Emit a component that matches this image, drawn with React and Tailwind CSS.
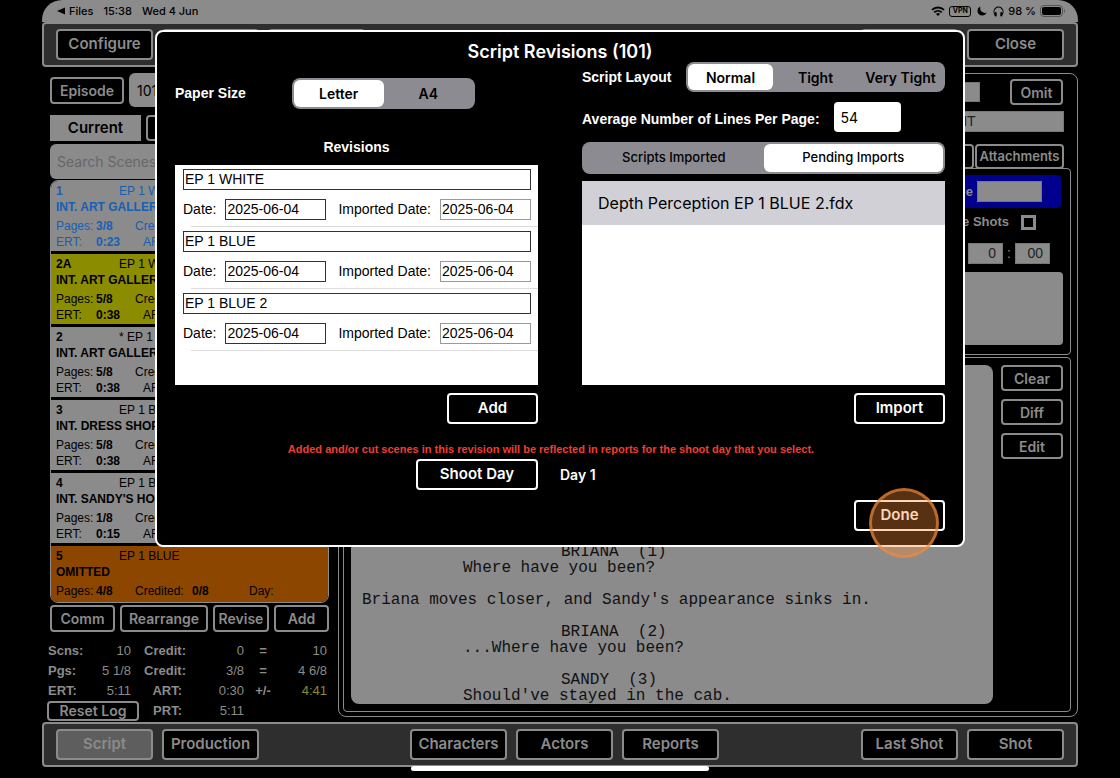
import React, { useState } from 'react';

const scenes = [
    { id: '1', revision: 'EP 1 WHITE', title: 'INT. ART GALLERY', pages: '3/8', ert: '0:23', color: 'bg-[#8b8b8b] text-[#1660b4]' },
    { id: '2A', revision: 'EP 1 WHITE', title: 'INT. ART GALLERY', pages: '5/8', ert: '0:38', color: 'bg-[#8c8c00] text-black' },
    { id: '2', revision: '* EP 1 BLUE', title: 'INT. ART GALLERY', pages: '5/8', ert: '0:38', color: 'bg-[#8b8b8b] text-black' },
    { id: '3', revision: 'EP 1 BLUE', title: 'INT. DRESS SHOP', pages: '5/8', ert: '0:38', color: 'bg-[#8b8b8b] text-black' },
    { id: '4', revision: 'EP 1 BLUE', title: "INT. SANDY'S HOUSE", pages: '1/8', ert: '0:15', color: 'bg-[#8b8b8b] text-black' },
    { id: '5', revision: 'EP 1 BLUE', title: 'OMITTED', pages: '4/8', ert: '', color: 'bg-[#8c4600] text-black' },
];

const initialRevisions = [
    { name: 'EP 1 WHITE', date: '2025-06-04', imported: '2025-06-04' },
    { name: 'EP 1 BLUE', date: '2025-06-04', imported: '2025-06-04' },
    { name: 'EP 1 BLUE 2', date: '2025-06-04', imported: '2025-06-04' },
];

const scriptLines = [
    { type: 'character', text: 'BRIANA  (1)' },
    { type: 'dialogue', text: 'Where have you been?' },
    { type: 'blank', text: ' ' },
    { type: 'action', text: "Briana moves closer, and Sandy's appearance sinks in." },
    { type: 'blank', text: ' ' },
    { type: 'character', text: 'BRIANA  (2)' },
    { type: 'dialogue', text: '...Where have you been?' },
    { type: 'blank', text: ' ' },
    { type: 'character', text: 'SANDY  (3)' },
    { type: 'dialogue', text: "Should've stayed in the cab." },
];

const lineIndent = {
    character: 'pl-[199px]',
    dialogue: 'pl-[101px]',
    action: '',
    blank: '',
};

// Outlined button used all over the dimmed screen
const ToolButton = ({ children, className = '', active = false }) => (
    <button className={`border-2 border-[#8b8b8b] rounded text-[#8b8b8b] font-semibold whitespace-nowrap ${active ? 'bg-[#5e5e5e]' : 'bg-black'} ${className}`}>
        {children}
    </button>
);

// Brighter version for the dialog
const DialogButton = ({ children, className = '', onClick }) => (
    <button onClick={onClick} className={`h-[31px] border-2 border-white rounded bg-black text-white text-[15px] font-semibold whitespace-nowrap ${className}`}>
        {children}
    </button>
);

const Segmented = ({ label, options, value, onChange, className = '', itemClassName = '' }) => (
    <div role="group" aria-label={label} className={`flex bg-[#8c8b91] rounded-lg p-0.5 ${className}`}>
        {options.map(option => (
            <button
                key={option}
                aria-pressed={value === option}
                onClick={() => onChange(option)}
                className={`flex-1 rounded-md whitespace-nowrap text-black ${value === option ? 'bg-white' : ''} ${itemClassName}`}
            >
                {option}
            </button>
        ))}
    </div>
);

const StatusBar = () => (
    <div className="h-[22px] shrink-0 flex items-center justify-between pl-[15px] pr-3 bg-[#8b8b8b] text-black text-[11px] font-medium rounded-t-[20px]">
        <div className="flex items-center">
            <svg width="8" height="8" viewBox="0 0 8 8" className="mr-1"><path d="M8 0.5v7L0 4z" fill="currentColor" /></svg>
            <span className="mr-2.5">Files</span>
            <span className="mr-2.5">15:38</span>
            <span>Wed 4 Jun</span>
        </div>
        <div className="flex items-center">
            <svg width="14" height="10" viewBox="0 0 14 10" fill="none" stroke="currentColor" className="mr-1">
                <path d="M1 3.9a8.6 8.6 0 0 1 12 0" strokeWidth="1.9" />
                <path d="M3.2 6.3a5.5 5.5 0 0 1 7.6 0" strokeWidth="1.8" />
                <path d="M5 8a3 3 0 0 1 4 0L7 10z" fill="currentColor" stroke="none" />
            </svg>
            <span className="h-[11px] w-[22px] mr-1.5 flex items-center justify-center border border-black rounded-[3px] text-[7px] font-bold">VPN</span>
            <svg width="10" height="10" viewBox="0 0 10 10" className="mr-1.5">
                <path d="M3.4 0.6C1.6 1.300 0.500 3 0.500 4.900a4.700 4.700 0 0 0 4.700 4.700c2 0 3.700-1.200 4.400-3C5.900 7.900 2.100 4.500 3.400 0.600z" fill="currentColor" />
            </svg>
            <svg width="11" height="11" viewBox="0 0 11 11" className="mr-1">
                <path d="M2.3 8.8A4.5 4.5 0 1 1 8.7 8.8" fill="none" stroke="currentColor" strokeWidth="1.1" />
                <rect x="1.6" y="6" width="2.1" height="4.4" rx="1" fill="currentColor" />
                <rect x="7.3" y="6" width="2.1" height="4.4" rx="1" fill="currentColor" />
            </svg>
            <span className="mr-1">98 %</span>
            <svg width="26" height="12" viewBox="0 0 26 12">
                <rect x="0.5" y="0.5" width="22" height="11" rx="3.5" fill="none" stroke="#555" />
                <rect x="2" y="2" width="19" height="8" rx="2" fill="#000" />
                <path d="M24 4v4c1.3-.5 1.3-3.5 0-4z" fill="#555" />
            </svg>
        </div>
    </div>
);

const SceneRow = ({ scene }) => (
    <li className={`h-[70px] shrink-0 px-[5px] pt-0.5 text-[12px] leading-4 ${scene.color}`}>
        <div className="flex">
            <span className="w-[63px] font-bold">{scene.id}</span>
            <span>{scene.revision}</span>
        </div>
        <div className="font-bold whitespace-nowrap">{scene.title}</div>
        <div className="flex mt-[3px]">
            <span className="w-[40px] whitespace-nowrap">Pages:</span>
            <span className="w-[39px] font-bold">{scene.pages}</span>
            <span className="w-[57px]">Credited:</span>
            <span className="w-[57px] font-bold">0/8</span>
            <span>Day:</span>
        </div>
        {scene.ert && (
            <div className="flex">
                <span className="w-[40px]">ERT:</span>
                <span className="w-[47px] font-bold">{scene.ert}</span>
                <span>ART:</span>
            </div>
        )}
    </li>
);

const ScenePanel = () => (
    <aside className="w-[287px] shrink-0 flex flex-col pl-[5px] pt-1.5 pb-px">
        <div className="flex items-center gap-[5px] pl-[3px]">
            <ToolButton className="w-[74px] h-[27px] text-[14px]">Episode</ToolButton>
            <input aria-label="Episode number" defaultValue="101" className="min-w-0 flex-1 h-[34px] px-2 rounded-md bg-[#8b8b8b] text-black text-[14px]" />
        </div>
        <div className="flex gap-[5px] mt-2 pl-[3px]">
            <button className="w-[91px] h-[26px] bg-[#8b8b8b] text-black text-[15px] font-semibold">Current</button>
            <ToolButton className="flex-1 h-[26px] text-[14px]">Revised</ToolButton>
        </div>
        <div className="mt-[3px] pl-[3px]">
            <input aria-label="Search Scenes" placeholder="Search Scenes" className="w-full h-[35px] px-[7px] rounded-md bg-[#8b8b8b] placeholder:text-[#67676a] text-[14px]" />
        </div>
        <div className="ml-[3px] mt-px flex-1 min-h-0 border border-[#8b8b8b] rounded-lg overflow-hidden">
            <ul className="flex flex-col gap-[3px] font-['Liberation_Sans',Arial,sans-serif]">
                {scenes.map(scene => <SceneRow key={scene.id} scene={scene} />)}
            </ul>
        </div>
        <div className="flex gap-[5px] mt-0.5 pl-[3px] text-[14px]">
            <ToolButton className="w-[65px] h-[27px]">Comm</ToolButton>
            <ToolButton className="w-[88px] h-[27px]">Rearrange</ToolButton>
            <ToolButton className="w-[56px] h-[27px]">Revise</ToolButton>
            <ToolButton className="flex-1 h-[27px]">Add</ToolButton>
        </div>
        <div className="mt-[9px] grid grid-cols-[38px_46px_55px_58px_38px_1fr] auto-rows-[20px] items-center text-right text-[13px] text-[#8b8b8b] font-['Liberation_Sans',Arial,sans-serif] pr-0.5">
            <b className="text-left pl-px">Scns:</b><span>10</span><b>Credit:</b><span>0</span><b className="text-center">=</b><span>10</span>
            <b className="text-left pl-px">Pgs:</b><span>5 1/8</span><b>Credit:</b><span>3/8</span><b className="text-center">=</b><span>4 6/8</span>
            <b className="text-left pl-px">ERT:</b><span>5:11</span><b className="pr-1">ART:</b><span>0:30</span><b className="text-center">+/-</b><span className="text-[#8c8c2e]">4:41</span>
            <ToolButton className="col-span-2 w-[92px] h-[20px] leading-4 text-[14px] font-[Inter,sans-serif]">Reset Log</ToolButton><b className="pr-1">PRT:</b><span>5:11</span>
        </div>
    </aside>
);

const DetailPanel = () => (
    <section className="flex-1 min-w-0 flex flex-col mt-1.5 mb-[5px] pt-[5px] pl-1 pr-1.5 pb-1 border border-[#8b8b8b] rounded-lg text-[#8b8b8b]">
        <div className="flex items-center justify-end gap-[30px] pr-2">
            <input aria-label="Scene number" className="w-[80px] h-[20px] border border-[#777] bg-[#8b8b8b]" />
            <ToolButton className="w-[53px] h-[26px] text-[14px]">Omit</ToolButton>
        </div>
        <div className="flex justify-end mt-1.5 pr-[7px]">
            <input aria-label="Time of day" defaultValue="NIGHT" className="w-[135px] h-[21px] px-0.5 border border-[#777] bg-[#8b8b8b] text-[#222] text-[14px] font-['Liberation_Sans',Arial,sans-serif]" />
        </div>
        <div className="flex justify-end gap-px mt-3 pr-[7px] text-[13px]">
            <ToolButton className="w-[90px] h-[25px]">Notes</ToolButton>
            <ToolButton className="w-[89px] h-[25px]">Attachments</ToolButton>
        </div>
        <div className="h-[187px] -mt-px shrink-0 flex flex-col items-end pt-1.5 pr-[7px] border border-[#8b8b8b] rounded text-[13px] font-['Liberation_Sans',Arial,sans-serif]">
            <label className="h-[33px] w-full max-w-[300px] mr-0.5 flex items-center justify-end gap-1 pr-[19px] rounded bg-[#00008c] font-bold">
                Page
                <input className="w-[65px] h-[21px] border border-[#777] bg-[#8b8b8b]" />
            </label>
            <label className="flex items-center gap-3 mt-1.5 mr-[27px] h-4 font-bold">
                Include Shots
                <input type="checkbox" className="appearance-none w-[15px] h-[15px] border-3 border-[#8b8b8b]" />
            </label>
            <div className="flex items-center gap-1 mt-[13px] mr-[13px] text-[14px]">
                <input aria-label="Minutes" defaultValue="0" className="w-[35px] h-[21px] pr-1.5 border border-[#777] bg-[#8b8b8b] text-[#222] text-right" />
                <span>:</span>
                <input aria-label="Seconds" defaultValue="00" className="w-[35px] h-[21px] pr-1.5 border border-[#777] bg-[#8b8b8b] text-[#222] text-right" />
            </div>
            <textarea aria-label="Synopsis" className="w-full max-w-[640px] h-[73px] mt-2 resize-none rounded bg-[#8b8b8b]" />
        </div>
        <div className="flex-1 min-h-0 flex gap-2 mt-0.5 p-[7px] border border-[#8b8b8b] rounded">
            <div className="flex-1 min-w-0 flex flex-col justify-end pl-[11px] rounded-lg bg-[#8b8b8b] text-[#111] overflow-hidden font-['Liberation_Mono','Courier_New',monospace] text-[16px] leading-4">
                {scriptLines.map((line, i) => (
                    <p key={i} className={`whitespace-pre ${lineIndent[line.type]}`}>{line.text}</p>
                ))}
            </div>
            <div className="flex flex-col gap-2 text-[14px]">
                <ToolButton className="w-[62px] h-[26px]">Clear</ToolButton>
                <ToolButton className="w-[62px] h-[26px]">Diff</ToolButton>
                <ToolButton className="w-[62px] h-[26px]">Edit</ToolButton>
            </div>
        </div>
    </section>
);

const RevisionsDialog = () => {
    const [paper, setPaper] = useState('Letter');
    const [layout, setLayout] = useState('Normal');
    const [tab, setTab] = useState('Pending Imports');
    const [revisions, setRevisions] = useState(initialRevisions);

    const addRevision = () => {
        setRevisions([...revisions, { name: '', date: '', imported: '' }]);
    };

    return (
        <div role="dialog" aria-label="Script Revisions" className="w-full max-w-[810px] px-[18px] pt-2.5 pb-3.5 border-2 border-white rounded-lg bg-black text-white">
            <h1 className="text-center text-[18px] leading-5 font-semibold">Script Revisions (101)</h1>

            <div className="grid grid-cols-2 gap-x-11 font-['Liberation_Sans',Arial,sans-serif]">
                <div className="flex flex-col pt-4">
                    <div className="flex items-center">
                        <span className="w-[117px] text-[14px] font-bold">Paper Size</span>
                        <Segmented label="Paper Size" options={['Letter', 'A4']} value={paper} onChange={setPaper} className="w-[183px] h-[31px]" itemClassName="font-[Inter,sans-serif] text-[14px] font-semibold" />
                    </div>
                    <h2 className="mt-7 text-center text-[14px] leading-5 font-bold">Revisions</h2>
                    <ul className="mt-2 h-[220px] overflow-hidden bg-white text-black text-[14px]">
                        {revisions.map((revision, i) => (
                            <li key={i} className="pl-2 pt-1">
                                <input aria-label="Revision name" defaultValue={revision.name} className="block w-[calc(100%-7px)] h-[21px] px-px border border-[#333]" />
                                <div className="flex items-center justify-between mt-[9px] pr-[7px]">
                                    <label className="flex items-center gap-[9px]">
                                        Date:
                                        <input defaultValue={revision.date} className="w-[101px] h-[21px] px-px border border-[#333]" />
                                    </label>
                                    <label className="flex items-center gap-[9px]">
                                        Imported Date:
                                        <input readOnly defaultValue={revision.imported} className="w-[91px] h-[21px] px-px border border-[#999]" />
                                    </label>
                                </div>
                                <div className="h-px ml-2 mt-1.5 bg-[#dcdcdc]" />
                            </li>
                        ))}
                    </ul>
                </div>

                <div className="flex flex-col">
                    <div className="flex items-center justify-between">
                        <span className="text-[14px] font-bold">Script Layout</span>
                        <Segmented label="Script Layout" options={['Normal', 'Tight', 'Very Tight']} value={layout} onChange={setLayout} className="w-[259px] h-[30px]" itemClassName="font-[Inter,sans-serif] text-[14px] font-semibold" />
                    </div>
                    <label className="flex items-center gap-3.5 mt-2.5 text-[14px] font-bold">
                        <span className="pt-1">Average Number of Lines Per Page:</span>
                        <input defaultValue="54" className="w-[67px] h-[30px] px-[7px] rounded bg-white text-black font-[Inter,sans-serif] text-[14px] font-normal" />
                    </label>
                    <Segmented label="Imports" options={['Scripts Imported', 'Pending Imports']} value={tab} onChange={setTab} className="mt-2.5 h-[32px]" itemClassName="font-[Inter,sans-serif] text-[13px] font-medium" />
                    <ul className="mt-[7px] flex-1 bg-white text-black font-[Inter,sans-serif]">
                        <li className="h-11 flex items-center px-4 bg-[#d1d0d6] text-[16px]">Depth Perception EP 1 BLUE 2.fdx</li>
                    </ul>
                </div>
            </div>

            <div className="grid grid-cols-2 gap-x-11 mt-2 justify-items-end">
                <DialogButton className="w-[91px]" onClick={addRevision}>Add</DialogButton>
                <DialogButton className="w-[91px]">Import</DialogButton>
            </div>

            <p className="mt-[17px] pr-[18px] text-center text-[11px] leading-4 font-bold text-[#f23c32] font-['Liberation_Sans',Arial,sans-serif]">
                Added and/or cut scenes in this revision will be reflected in reports for the shoot day that you select.
            </p>
            <div className="grid grid-cols-2 gap-x-[22px] items-center mt-0.5 pr-[22px]">
                <DialogButton className="w-[122px] justify-self-end">Shoot Day</DialogButton>
                <span className="text-[14px] font-semibold">Day 1</span>
            </div>
            <div className="flex justify-end mt-2.5">
                <div className="relative">
                    <DialogButton className="block w-[91px]">Done</DialogButton>
                    {/* tap highlight */}
                    <span className="absolute left-[15px] -top-3 size-[70px] rounded-full border-3 border-[#f08a3c]/65 bg-[#fb8a35]/35 pointer-events-none" />
                </div>
            </div>
        </div>
    );
};

const App = () => (
    <div className="relative h-screen flex flex-col px-[42px] bg-black font-[Inter,'Open_Sans',sans-serif]">
        <StatusBar />
        <header className="h-[45px] shrink-0 flex items-center justify-between px-3 border-2 border-[#8b8b8b] rounded-sm bg-[#2e2e2e] text-[15px]">
            <div className="flex gap-[9px]">
                <ToolButton className="w-[97px] h-[31px]">Configure</ToolButton>
                <ToolButton className="w-[97px] h-[31px]">Scenes</ToolButton>
                <ToolButton className="w-[97px] h-[31px]">Scripts</ToolButton>
            </div>
            <div className="flex gap-[9px]">
                <ToolButton className="w-[97px] h-[31px]">Sync</ToolButton>
                <ToolButton className="w-[97px] h-[31px]">Close</ToolButton>
            </div>
        </header>

        <main className="flex-1 min-h-0 flex gap-[9px]">
            <ScenePanel />
            <DetailPanel />
        </main>

        <footer className="h-[45px] shrink-0 mb-[11px] flex items-center justify-between px-3 border-2 border-[#8b8b8b] rounded-sm bg-[#2e2e2e] text-[15px]">
            <div className="flex gap-[9px]">
                <ToolButton active className="w-[97px] h-[31px]">Script</ToolButton>
                <ToolButton className="w-[97px] h-[31px]">Production</ToolButton>
            </div>
            <div className="flex gap-[9px] pl-[9px]">
                <ToolButton className="w-[97px] h-[31px]">Characters</ToolButton>
                <ToolButton className="w-[97px] h-[31px]">Actors</ToolButton>
                <ToolButton className="w-[97px] h-[31px]">Reports</ToolButton>
            </div>
            <div className="flex gap-[9px]">
                <ToolButton className="w-[97px] h-[31px]">Last Shot</ToolButton>
                <ToolButton className="w-[97px] h-[31px]">Shot</ToolButton>
            </div>
        </footer>

        <div className="absolute inset-x-0 bottom-[7px] flex justify-center">
            <div className="w-[298px] h-[5px] rounded-full bg-white" />
        </div>

        <div className="absolute inset-x-0 top-[30px] flex justify-center">
            <RevisionsDialog />
        </div>
    </div>
);

export default App;
